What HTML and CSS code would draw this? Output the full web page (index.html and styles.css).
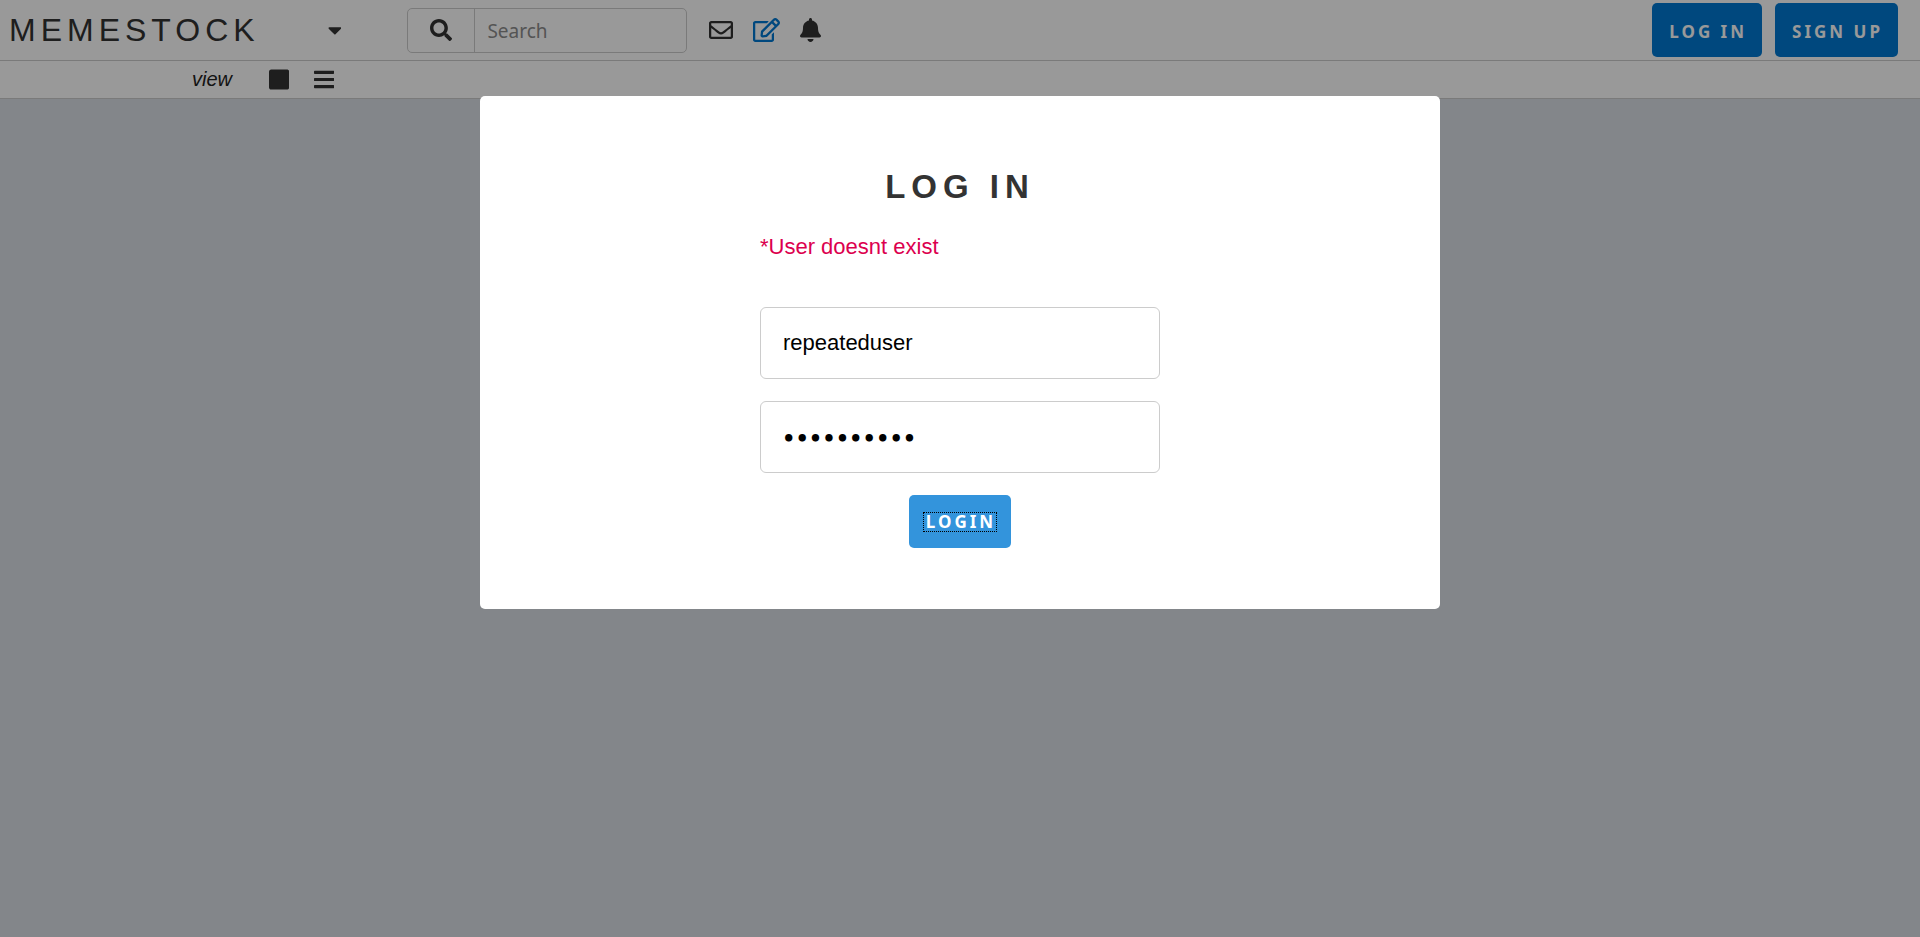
FILE: index.html
```html
<!DOCTYPE html>
<html lang="en">
<head>
<meta charset="utf-8">
<title>Memestock</title>
<link rel="stylesheet" href="styles.css">
</head>
<body>
<header class="topbar">
  <a class="brand" href="#">MEMESTOCK</a>
  <button class="icon-btn caret" type="button" aria-label="Open menu">
    <svg class="icon" viewBox="0 0 320 512"><path d="M31.3 192h257.3c17.8 0 26.7 21.5 14.1 34.1L174.1 354.8c-7.8 7.8-20.5 7.8-28.3 0L17.2 226.1C4.6 213.5 13.5 192 31.3 192z"/></svg>
  </button>
  <form class="search">
    <button class="icon-btn search-btn" type="button" aria-label="Search">
      <svg class="icon" viewBox="0 0 512 512"><path d="M505 442.7L405.3 343c-4.5-4.5-10.6-7-17-7H372c27.6-35.3 44-79.7 44-128C416 93.1 322.9 0 208 0S0 93.1 0 208s93.1 208 208 208c48.3 0 92.7-16.4 128-44v16.3c0 6.4 2.5 12.5 7 17l99.7 99.7c9.4 9.4 24.6 9.4 33.9 0l28.3-28.3c9.4-9.4 9.4-24.6.1-34zM208 336c-70.7 0-128-57.2-128-128 0-70.7 57.2-128 128-128 70.7 0 128 57.2 128 128 0 70.7-57.2 128-128 128z"/></svg>
    </button>
    <input class="search-input" type="text" placeholder="Search" aria-label="Search">
  </form>
  <nav class="actions">
    <a class="action" href="#" aria-label="Messages"><svg class="icon icon-lg" viewBox="0 0 512 512"><path d="M464 64H48C21.49 64 0 85.49 0 112v288c0 26.51 21.49 48 48 48h416c26.51 0 48-21.49 48-48V112c0-26.51-21.49-48-48-48zm0 48v40.805c-22.422 18.259-58.168 46.651-134.587 106.49-16.841 13.247-50.201 45.072-73.413 44.701-23.208.375-56.579-31.459-73.413-44.701C106.18 199.465 70.425 171.067 48 152.805V112h416zM48 400V214.398c22.914 18.251 55.409 43.862 104.938 82.646 21.857 17.205 60.134 55.186 103.062 54.955 42.717.231 80.509-37.199 103.053-54.947 49.528-38.783 82.032-64.401 104.947-82.653V400H48z"/></svg></a>
    <a class="action action-primary" href="#" aria-label="New post"><svg class="icon icon-lg" viewBox="0 0 576 512"><path d="M402.3 344.9l32-32c5-5 13.7-1.5 13.7 5.7V464c0 26.5-21.5 48-48 48H48c-26.5 0-48-21.5-48-48V112c0-26.5 21.5-48 48-48h273.5c7.1 0 10.7 8.6 5.7 13.7l-32 32c-1.5 1.5-3.5 2.3-5.7 2.3H48v352h352V350.5c0-2.1.8-4.1 2.3-5.6zm156.6-201.8L296.3 405.7l-90.4 10c-26.2 2.9-48.5-19.2-45.6-45.6l10-90.4L432.9 17.1c22.9-22.9 59.9-22.9 82.7 0l43.2 43.2c22.9 22.9 22.9 60 .1 82.8zM460.1 174L402 115.9 216.2 301.8l-7.3 65.3 65.3-7.3L460.1 174zm64.8-79.7l-43.2-43.2c-4.1-4.1-10.8-4.1-14.8 0L436 82l58.1 58.1 30.9-30.9c4-4.2 4-10.8-.1-14.9z"/></svg></a>
    <a class="action" href="#" aria-label="Notifications"><svg class="icon icon-lg" viewBox="0 0 448 512"><path d="M224 512c35.32 0 63.97-28.65 63.97-64H160.03c0 35.35 28.65 64 63.97 64zm215.39-149.71c-19.32-20.76-55.47-51.99-55.47-154.29 0-77.7-54.48-139.9-127.94-155.16V32c0-17.67-14.32-32-31.98-32s-31.98 14.33-31.98 32v20.84C118.56 68.1 64.08 130.3 64.08 208c0 102.3-36.15 133.53-55.47 154.29-6 6.45-8.66 14.16-8.61 21.71.11 16.4 12.98 32 32.1 32h383.8c19.12 0 32-15.6 32.1-32 .05-7.55-2.61-15.27-8.61-21.71z"/></svg></a>
  </nav>
  <div class="account">
    <button class="btn" type="button">LOG IN</button>
    <button class="btn" type="button">SIGN UP</button>
  </div>
</header>

<div class="viewbar">
  <span class="view-label">view</span>
  <button class="icon-btn" type="button" aria-label="Card view"><svg class="icon" viewBox="0 0 448 512"><path d="M400 32H48C21.5 32 0 53.5 0 80v352c0 26.5 21.5 48 48 48h352c26.5 0 48-21.5 48-48V80c0-26.5-21.5-48-48-48z"/></svg></button>
  <button class="icon-btn" type="button" aria-label="List view"><svg class="icon" viewBox="0 0 448 512"><path d="M16 132h416c8.837 0 16-7.163 16-16V76c0-8.837-7.163-16-16-16H16C7.163 60 0 67.163 0 76v40c0 8.837 7.163 16 16 16zm0 160h416c8.837 0 16-7.163 16-16v-40c0-8.837-7.163-16-16-16H16c-8.837 0-16 7.163-16 16v40c0 8.837 7.163 16 16 16zm0 160h416c8.837 0 16-7.163 16-16v-40c0-8.837-7.163-16-16-16H16c-8.837 0-16 7.163-16 16v40c0 8.837 7.163 16 16 16z"/></svg></button>
</div>

<div class="overlay">
  <main class="modal" role="dialog" aria-labelledby="login-title">
    <form class="login">
      <h1 class="login-title" id="login-title">LOG IN</h1>
      <p class="login-error">*User doesnt exist</p>
      <input class="field" type="text" value="repeateduser" aria-label="Username">
      <input class="field field-password" type="password" value="repeatpass" aria-label="Password">
      <button class="btn btn-login" type="button"><span class="focus-ring">LOGIN</span></button>
    </form>
  </main>
</div>
</body>
</html>
```
FILE: styles.css
```css
* {
  box-sizing: border-box;
}

body {
  margin: 0;
  min-height: 100vh;
  background: #dae0e6;
  color: #333;
  font-family: "Liberation Sans", Arial, sans-serif;
  font-size: 22px;
}

button,
input {
  margin: 0;
  font: inherit;
}

.icon {
  display: block;
  height: 22px;
  fill: currentColor;
}

.icon-lg {
  height: 24px;
}

.icon-btn {
  display: flex;
  align-items: center;
  justify-content: center;
  padding: 0;
  border: 0;
  background: none;
  color: #333;
}

/* Header */

.topbar {
  display: flex;
  align-items: center;
  height: 61px;
  padding: 0 22px 0 9px;
  border-bottom: 1px solid #ccc;
  background: #fff;
}

.brand {
  color: #333;
  font-size: 32px;
  letter-spacing: 5px;
  text-decoration: none;
}

.caret {
  margin: 0 66px 0 68px;
}

.search {
  display: flex;
  width: 280px;
  height: 45px;
  border: 1px solid #ccc;
  border-radius: 5px;
}

.search-btn {
  width: 67px;
  border-right: 1px solid #ccc;
}

.search-input {
  flex: 1;
  min-width: 0;
  padding: 2px 12px 0;
  border: 0;
  background: none;
  font-family: "Noto Sans", sans-serif;
  font-size: 19px;
}

.search-input::placeholder {
  color: #8c8c8c;
}

.actions {
  display: flex;
  gap: 20px;
  margin-left: 22px;
}

.action {
  color: #333;
}

.action-primary {
  color: #0079d3;
}

.account {
  display: flex;
  gap: 13px;
  margin-left: auto;
}

.btn {
  height: 54px;
  padding: 2px 15px 0 17px;
  border: 0;
  border-radius: 5px;
  background: #0079d3;
  color: #fff;
  font-family: "Noto Sans", Verdana, sans-serif;
  font-size: 17px;
  font-weight: 700;
  letter-spacing: 3px;
}

/* View switcher */

.viewbar {
  display: flex;
  align-items: center;
  height: 38px;
  padding-left: 10%;
  border-bottom: 1px solid #ccc;
  background: #fff;
}

.view-label {
  margin-right: 12px;
  color: #222;
  font-size: 20px;
  font-style: italic;
}

.viewbar .icon {
  height: 23px;
}

.viewbar .icon-btn {
  margin: 0 0 1px 25px;
}

/* Log-in dialog */

.overlay {
  position: fixed;
  inset: 0;
  padding-top: 96px;
  background: rgba(0, 0, 0, 0.4);
}

.modal {
  width: 50%;
  margin: 0 auto;
  padding: 72px 20px 61px;
  border-radius: 5px;
  background: #fff;
}

.login {
  display: flex;
  flex-direction: column;
  align-items: center;
  gap: 22px;
  max-width: 400px;
  margin: 0 auto;
}

.login-title {
  margin: 0;
  font-size: 33px;
  line-height: 38px;
  letter-spacing: 6px;
}

.login-error {
  align-self: stretch;
  margin: 6px 0 26px;
  color: #dc004e;
  line-height: 25px;
}

.field {
  width: 100%;
  height: 72px;
  padding: 0 22px;
  border: 1px solid #ccc;
  border-radius: 6px;
  background: #fff;
  color: #000;
}

.field-password {
  padding: 3px 21px 0;
  font-family: "DejaVu Sans", sans-serif;
  font-size: 21px;
  font-weight: 700;
}

.btn-login {
  height: 53px;
  padding: 0 14px;
  background: #3394dc;
}

.focus-ring {
  display: block;
  padding: 0 1px 0 3px;
  outline: 1px dotted #000;
  outline-offset: -1px;
  line-height: 20px;
}
```
